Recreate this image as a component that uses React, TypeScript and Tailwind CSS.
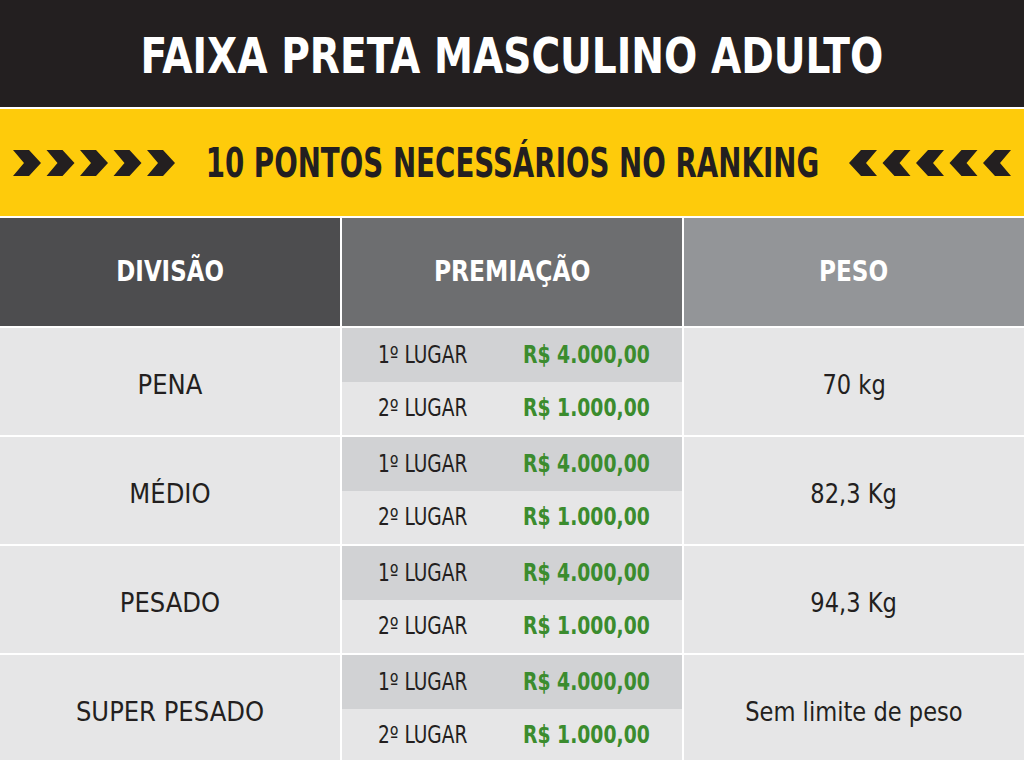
import React from 'react';

const font = { fontFamily: '"DejaVu Sans Condensed", "Liberation Sans Narrow", "Liberation Sans", sans-serif' };

const rows = [
  { divisao: 'PENA', peso: '70 kg' },
  { divisao: 'MÉDIO', peso: '82,3 Kg' },
  { divisao: 'PESADO', peso: '94,3 Kg' },
  { divisao: 'SUPER PESADO', peso: 'Sem limite de peso' },
];

// five black arrow heads, flipped for the right side
const Chevrons = ({ flip }: { flip?: boolean }) => (
  <svg width="162" height="26" viewBox="0 0 162 26" className={`shrink-0 ${flip ? 'scale-x-[-1]' : ''}`}>
    {[0, 1, 2, 3, 4].map((i) => (
      <polygon
        key={i}
        transform={`translate(${i * 33.5} 0)`}
        points="0,0 16,0 28,13 16,26 0,26 11,13"
        fill="#231f20"
      />
    ))}
  </svg>
);

const Prize = ({ place, value, dark }: { place: string; value: string; dark?: boolean }) => (
  <div className={`flex-1 flex items-center pl-[36px] text-[24px] ${dark ? 'bg-[#d1d2d4]' : 'bg-[#e6e6e7]'}`}>
    <span className="w-[145px] shrink-0 text-[#231f20]">
      <span className="inline-block origin-left scale-x-[0.86]">{place}</span>
    </span>
    <span className="text-[#3b8c2e] font-bold whitespace-nowrap">
      <span className="inline-block origin-left scale-x-[0.87]">{value}</span>
    </span>
  </div>
);

export default function App() {
  return (
    <div className="w-[1024px] h-[760px] overflow-hidden bg-white flex flex-col gap-[2px]" style={font}>
      <div className="h-[107px] shrink-0 bg-[#231f20] flex items-center justify-center pt-[4px]">
        <h1 className="inline-block scale-x-[0.87] text-white text-[50px] font-bold leading-none whitespace-nowrap">
          FAIXA PRETA MASCULINO ADULTO
        </h1>
      </div>

      <div className="h-[107px] shrink-0 bg-[#fecb0b] flex items-center px-[13px]">
        <Chevrons />
        <div className="flex-1 w-0 flex justify-center">
          <span className="inline-block shrink-0 scale-x-[0.77] text-[#231f20] text-[40px] font-bold leading-none whitespace-nowrap">
            10 PONTOS NECESSÁRIOS NO RANKING
          </span>
        </div>
        <Chevrons flip />
      </div>

      <div className="h-[108px] shrink-0 grid grid-cols-3 gap-[2px] text-white text-[28px] font-bold">
        <div className="bg-[#4d4d4f] flex items-center justify-center">
          <span className="inline-block scale-x-[0.91]">DIVISÃO</span>
        </div>
        <div className="bg-[#6d6e70] flex items-center justify-center">
          <span className="inline-block scale-x-[0.93]">PREMIAÇÃO</span>
        </div>
        <div className="bg-[#939598] flex items-center justify-center">
          <span className="inline-block scale-x-[0.92]">PESO</span>
        </div>
      </div>

      {rows.map((r) => (
        <div key={r.divisao} className="h-[107px] shrink-0 grid grid-cols-3 gap-[2px] text-[#231f20] text-[27px]">
          <div className="bg-[#e6e6e7] flex items-center justify-center pt-[8px]">{r.divisao}</div>
          <div className="flex flex-col">
            <Prize place="1º LUGAR" value="R$ 4.000,00" dark />
            <Prize place="2º LUGAR" value="R$ 1.000,00" />
          </div>
          <div className="bg-[#e6e6e7] flex items-center justify-center pt-[8px]">
            <span className="inline-block scale-x-[0.93]">{r.peso}</span>
          </div>
        </div>
      ))}
    </div>
  );
}
